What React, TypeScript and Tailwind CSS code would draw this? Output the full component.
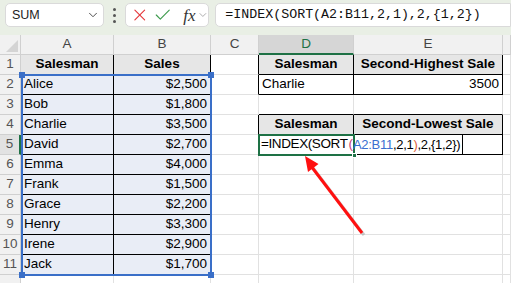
import React from "react";
import { X, Check, ChevronDown } from "lucide-react";

type C = { t?: React.ReactNode; cls?: string };

const G = "border-r border-b border-[#e1e1e1]";

function Cell({ t, cls }: C) {
  return (
    <div className={`h-full overflow-hidden whitespace-nowrap flex items-center ${cls ?? G}`}>
      {t}
    </div>
  );
}

const hdr = "border-r border-b border-[#d0d0d0] bg-[#f1f1f1] justify-center text-[#444]";
const rowH = "border-r border-b border-[#d0d0d0] bg-[#f1f1f1] justify-center text-[#555]";
const tbl = "border-r border-b border-black bg-[#e9edf6] px-[3px]";
const tblR = "border-r border-b border-black bg-[#e9edf6] justify-end pr-[3px]";
const th = "border-r border-b border-black bg-[#e6e6e6] justify-center font-bold";
const cBlack = "border-r border-b border-r-black border-b-[#e1e1e1]";
const wb = "border-r border-b border-black px-[3px]";
const wbR = "border-r border-b border-black justify-end pr-[3px]";
const grayB = "border-r border-b border-r-[#e1e1e1] border-b-black";

const names: [string, string][] = [
  ["Alice", "$2,500"],
  ["Bob", "$1,800"],
  ["Charlie", "$3,500"],
  ["David", "$2,700"],
  ["Emma", "$4,000"],
  ["Frank", "$1,500"],
  ["Grace", "$2,200"],
  ["Henry", "$3,300"],
  ["Irene", "$2,900"],
  ["Jack", "$1,700"],
];

export default function App() {
  const rows: C[][] = [];
  rows.push([
    { t: "1", cls: rowH },
    { t: "Salesman", cls: th },
    { t: "Sales", cls: th },
    { cls: cBlack },
    { t: "Salesman", cls: th },
    { t: "Second-Highest Sale", cls: th },
    {},
  ]);
  names.forEach(([n, s], i) => {
    const r = i + 2;
    let c: C, d: C, e: C;
    if (r === 2) {
      c = { cls: cBlack };
      d = { t: "Charlie", cls: wb };
      e = { t: "3500", cls: wbR };
    } else if (r === 3) {
      c = {};
      d = { cls: grayB };
      e = { cls: grayB };
    } else if (r === 4) {
      c = { cls: cBlack };
      d = { t: "Salesman", cls: th };
      e = { t: "Second-Lowest Sale", cls: th };
    } else if (r === 5) {
      c = { cls: cBlack };
      d = { cls: "border-r border-b border-black relative overflow-visible z-10" };
      e = { cls: wb };
    } else {
      c = {};
      d = {};
      e = {};
    }
    rows.push([
      {
        t: String(r),
        cls:
          r === 5
            ? "border-r-2 border-b border-r-[#1e7145] border-b-[#d0d0d0] bg-[#e2e2e2] justify-center text-[#555]"
            : rowH,
      },
      { t: n, cls: tbl },
      { t: s, cls: tblR },
      c,
      d,
      e,
      {},
    ]);
  });
  rows.push([{ t: "", cls: rowH }, {}, {}, {}, {}, {}, {}]);

  return (
    <div className="relative w-[511px] h-[283px] overflow-hidden bg-white font-['Liberation_Sans',Arial,sans-serif] text-[13.5px] text-black">
      {/* formula bar */}
      <div className="h-[35px] bg-[#e9efe5] flex items-start pt-[3px] pl-[5px]">
        <div className="w-[100px] h-[24px] bg-white rounded-[5px] border border-[#dadada] flex items-center justify-between pl-[6px] pr-[3px]">
          <span className="text-[12.5px] text-[#222]">SUM</span>
          <ChevronDown size={14} strokeWidth={1.6} className="text-[#444]" />
        </div>
        <div className="w-[22px] h-[24px] flex flex-col items-center justify-center gap-[3px]">
          <span className="w-[3px] h-[3px] rounded-full bg-[#555]" />
          <span className="w-[3px] h-[3px] rounded-full bg-[#555]" />
          <span className="w-[3px] h-[3px] rounded-full bg-[#555]" />
        </div>
        <div className="w-[84px] h-[24px] bg-white rounded-[5px] border border-[#dadada] flex items-center pl-[4px] gap-[3px]">
          <X size={20} strokeWidth={1.4} className="text-[#e5383b]" />
          <Check size={20} strokeWidth={1.4} className="text-[#3c9a4c]" />
          <span className="ml-[8px] font-['Liberation_Serif',serif] italic text-[17px] text-[#333] leading-none">
            fx
          </span>
          <ChevronDown size={12} strokeWidth={1.4} className="text-[#888] -ml-[2px]" />
        </div>
        <div className="ml-[6px] w-[300px] h-[24px] bg-white rounded-l-[5px] border border-[#dadada] flex items-center pl-[9px]">
          <span className="font-['Liberation_Mono',monospace] text-[13.3px] text-[#111]">
            =INDEX(SORT(A2:B11,2,1),2,{"{"}1,2{"}"})
          </span>
        </div>
      </div>

      {/* grid */}
      <div className="relative grid grid-cols-[21px_93px_97px_48px_95px_149px_1fr] grid-rows-[20px_repeat(12,20px)]">
        <div className="relative border-r border-b border-[#d0d0d0] bg-[#f1f1f1]">
          <div className="absolute right-[2px] bottom-[2px] w-0 h-0 border-l-[12px] border-l-transparent border-b-[12px] border-b-[#d4d4d4]" />
        </div>
        <Cell t="A" cls={hdr} />
        <Cell t="B" cls={hdr} />
        <Cell t="C" cls={hdr} />
        <Cell
          t="D"
          cls="border-r border-b-2 border-r-[#d0d0d0] border-b-[#1e7145] bg-[#d6d6d6] justify-center text-[#1e7145]"
        />
        <Cell t="E" cls={hdr} />
        <Cell t="" cls={hdr} />
        {rows.map((r, ri) =>
          r.map((c, ci) => {
            if (ri === 4 && ci === 4) {
              return (
                <div key={`${ri}-${ci}`} className={c.cls}>
                  <div className="absolute left-0 top-0 h-[19px] w-[204px] bg-white border-r border-black" />
                  <div className="absolute -left-[1px] -top-[1px] w-[97px] h-[22px] border-2 border-[#1e7145]" />
                  <div className="absolute left-[93px] top-[18px] w-[5px] h-[5px] bg-[#1e7145] border border-white" />
                  <div className="absolute left-0 top-0 h-[19px] flex items-center pl-[2px] whitespace-nowrap text-[13.5px]">
                    <span className="tracking-[-0.4px]">=INDEX(SORT</span>
                    <span className="text-[#c8407c] pl-[1px]">(</span>
                    <span className="text-[13px] tracking-[-0.3px] flex">
                      <span className="text-[#3b6fd0]">A2:B11</span>
                      <span>,2,1</span>
                      <span className="text-[#e0603a]">)</span>
                      <span>,2,{"{"}1,2{"}"})</span>
                    </span>
                  </div>
                </div>
              );
            }
            return <Cell key={`${ri}-${ci}`} t={c.t} cls={c.cls} />;
          })
        )}

        <div className="absolute left-[21px] top-[39px] w-[191px] h-[202px] border-2 border-[#3a6fc8] pointer-events-none">
          <div className="absolute -left-[4px] -top-[4px] w-[6px] h-[6px] bg-[#3a6fc8]" />
          <div className="absolute -right-[4px] -top-[4px] w-[6px] h-[6px] bg-[#3a6fc8]" />
          <div className="absolute -left-[4px] -bottom-[4px] w-[6px] h-[6px] bg-[#3a6fc8]" />
          <div className="absolute -right-[4px] -bottom-[4px] w-[6px] h-[6px] bg-[#3a6fc8]" />
        </div>
      </div>

      <svg className="absolute left-0 top-0 pointer-events-none" width="511" height="283">
        <line x1="364" y1="235" x2="313" y2="168" stroke="#9a9a9a" strokeOpacity="0.5" strokeWidth="3" />
        <line x1="362" y1="233" x2="311" y2="166" stroke="#ff1010" strokeWidth="3" />
        <polygon points="305,156 318.5,164 308,172" fill="#ff1010" />
      </svg>
    </div>
  );
}
